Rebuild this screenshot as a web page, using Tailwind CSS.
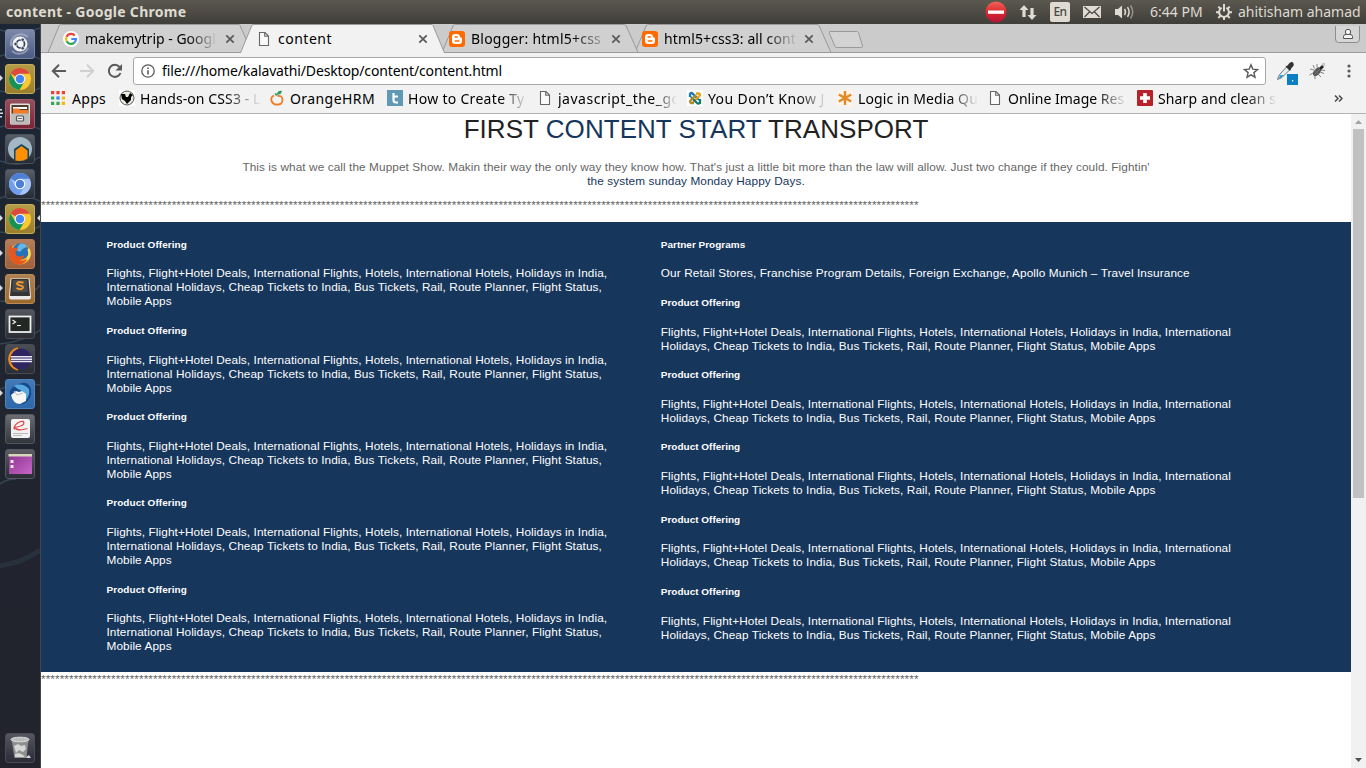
<!DOCTYPE html>
<html lang="en">
<head>
<meta charset="utf-8">
<title>content</title>
<script src="https://cdn.jsdelivr.net/npm/@tailwindcss/browser@4"></script>
</head>
<body class="w-[1366px] h-[768px] overflow-hidden flex flex-col bg-white font-['Noto_Sans',sans-serif] text-[14px] whitespace-nowrap">

<!-- shared symbols -->
<svg class="hidden">
  <symbol id="chrome" viewBox="0 0 24 24">
    <circle cx="12" cy="12" r="11" fill="#fbc92f"/>
    <path d="M12 12 2.500 6.500A11 11 0 0 1 21.600 6.700H12z" fill="#db4a3c"/>
    <path d="M2.500 6.500A11 11 0 0 0 11.500 23L16.500 14.500 12 12 7.300 14.600z" fill="#159257"/>
    <circle cx="12" cy="12" r="5.300" fill="#f3f3f3"/><circle cx="12" cy="12" r="4.200" fill="#4487f4"/>
  </symbol>
  <symbol id="page" viewBox="0 0 16 16"><path d="M3.500 1.500h5.500l3.500 3.500v9.500h-9zM8.700 1.700v3.600h3.600" fill="#fafafa" stroke="#666" stroke-width="1.100"/></symbol>
  <symbol id="blogger" viewBox="0 0 16 16"><rect width="16" height="16" rx="3" fill="#ff6a00"/><path d="M6 3h2.300a2.700 2.700 0 0 1 2.700 2.500c.1.900.4 1 1.100 1 .6 0 .9.400.9 1V10a3 3 0 0 1-3 3H6a3 3 0 0 1-3-3V6a3 3 0 0 1 3-3z" fill="#fff"/><path d="M6.200 6h2M6.200 10h3.700" stroke="#ff6a00" stroke-width="1.400" stroke-linecap="round"/></symbol>
  <symbol id="close" viewBox="0 0 10 10"><path d="M1.300 1.300l7.400 7.400M8.700 1.300l-7.400 7.400" stroke="#5a5a5a" stroke-width="1.700"/></symbol>
</svg>

<!-- system panel -->
<header class="h-[24px] shrink-0 flex items-center bg-linear-to-b from-[#5b584f] to-[#3f3e39] text-[#dfdbd2] pl-[6px] pr-[6px]">
  <div class="flex-1 font-bold tracking-[0.28px] leading-[22px]">content - Google Chrome</div>
  <svg class="w-[22px] h-[22px] mr-[12px]" viewBox="0 0 22 22"><defs><linearGradient id="stop" x2="0" y2="1"><stop stop-color="#f2635a"/><stop offset=".5" stop-color="#dc2a2e"/><stop offset="1" stop-color="#b3123a"/></linearGradient></defs><circle cx="11" cy="11" r="10.500" fill="url(#stop)"/><rect x="3" y="9.500" width="16" height="3.300" fill="#fff"/></svg>
  <svg class="w-[18px] h-[18px] mr-[13px]" viewBox="0 0 18 18" fill="#dfdbd2"><path d="M5 2l4.500 5H6.600v7H3.400V7H.5zM13 17l-4.500-5h2.900V5h3.200v7h2.900z"/></svg>
  <div class="w-[20px] h-[20px] rounded-[2px] bg-[#dfdbd2] text-[#4a4843] text-[12px] leading-[20px] text-center mr-[13px] tracking-[-0.5px] font-medium">En</div>
  <svg class="w-[18px] h-[14px] mr-[14px]" viewBox="0 0 18 14"><rect y="1" width="18" height="12" fill="#dfdbd2"/><path d="M1.500 2l7.500 6.500L16.500 2M1.500 12l5-5M16.500 12l-5-5" fill="none" stroke="#4c4a44" stroke-width="1.300"/></svg>
  <svg class="w-[20px] h-[16px] mr-[15px]" viewBox="0 0 20 16"><path d="M0 5h3l4-3.500v13L3 11H0z" fill="#dfdbd2"/><g fill="none" stroke="#dfdbd2" stroke-width="1.500"><path d="M9.500 5q2 3 0 6"/><path d="M12.500 3.200q3.200 4.800 0 9.600"/><path d="M15.500 1.500q4.500 6.500 0 13" opacity=".5"/></g></svg>
  <div class="w-[66px] leading-[22px]">6:44 PM</div>
  <svg class="w-[16px] h-[16px] mr-[6px]" viewBox="0 0 16 16" fill="none" stroke="#dfdbd2" stroke-width="2"><path d="M5.700 3.800a4.900 4.900 0 1 0 4.600 0M8 0v7.500"/><path d="M0 8.300h3M13 8.300h3M2.300 2.600l2.100 2.100M13.700 2.600l-2.100 2.100M2.300 14l2.100-2.100M13.700 14l-2.100-2.100M8 13v3"/></svg>
  <div class="w-[122px] leading-[22px]">ahitisham ahamad</div>
</header>

<div class="flex-1 flex min-h-0">
  <!-- launcher -->
  <nav class="w-[41px] relative shrink-0 flex flex-col gap-[5px] pt-[5px] pl-[5px] border-r border-[#45444a] bg-linear-to-b from-[#1c2634] via-[#20252f] to-[#22232d]">
    <svg class="absolute inset-0 w-[40px] h-[744px]" viewBox="0 0 40 744" fill="none" stroke="#4c6478" stroke-width="1.500" opacity=".5"><path d="M0 6q20 6 40-2M0 32q22-6 40 3M0 67q25 6 40-3M0 103q20-6 40 2M0 137q20 8 40-4M0 174q18-6 40 3M0 208q24 4 40-6M0 277q24 3 40-16M0 320q22-2 40-14M0 365q20-8 40-4M0 460q6-5 16-5" /><path d="M0 542q24-4 40-16" stroke-width="5" opacity=".4"/></svg>
    <svg class="absolute left-0 top-[50px] w-[40px] h-[340px]" viewBox="0 0 40 340" fill="#d8dadf"><path d="M0 1l3 3-3 3zM0 141l3 3-3 3zM0 176l3 3-3 3zM0 211l3 3-3 3zM0 316l3 3-3 3zM40 141l-3 3 3 3z"/><path d="M0 35h2v1.500H0zM0 38.500h3V40H0zM0 42h2v1.500H0z"/></svg>

    <div class="relative size-[30px] rounded-[3px] border border-[#7883a0] bg-linear-to-b from-[#7d89a8] to-[#4b5a82]"><svg class="size-full" viewBox="0 0 28 28" fill="none"><path d="M6 10a10 10 0 0 1 16-3M22 18a10 10 0 0 1-16 3M5 16A10 10 0 0 1 9 6" stroke="#c3cada" stroke-width="2" opacity=".5"/><circle cx="14" cy="14" r="7.500" fill="#f3f4f6"/><circle cx="14.500" cy="14" r="4" stroke="#35415c" stroke-width="1.700"/><g fill="#35415c" stroke="#f3f4f6" stroke-width=".7"><circle cx="9.500" cy="14" r="1.700"/><circle cx="16.700" cy="9.700" r="1.700"/><circle cx="16.700" cy="18.300" r="1.700"/></g></svg></div>
    <div class="relative size-[30px] rounded-[3px] border border-[#c4ab5c] bg-linear-to-b from-[#b39b48] to-[#9a7f2c] p-[2px]"><svg class="size-full"><use href="#chrome"/></svg></div>
    <div class="relative size-[30px] rounded-[3px] border border-[#a15a66] bg-linear-to-b from-[#93505c] to-[#7a2233]"><svg class="size-full" viewBox="0 0 28 28"><rect x="4" y="3.500" width="20" height="21" rx="1.500" fill="#e2e0dd"/><rect x="5.500" y="5" width="17" height="9" fill="#513b30"/><path d="M7 7h14v2H7z" fill="#fff"/><path d="M7 8.500h6l1 1.500h8v4H7z" fill="#f07c28"/><rect x="4.500" y="13.500" width="19" height="11" rx="1" fill="#bdbcba"/><rect x="10.500" y="16" width="7" height="5" rx="1" fill="#eee" stroke="#555" stroke-width="1.200"/><path d="M12 18.500h4" stroke="#666"/></svg></div>
    <div class="relative size-[30px] rounded-[3px] border border-[#4a505a] bg-linear-to-b from-[#585f68] to-[#252c36]"><svg class="size-full" viewBox="0 0 28 28"><circle cx="14" cy="14" r="12" fill="#a4b7c4"/><path d="M8 25V14l7.500-5 7.500 5v9q-7 5-15 2z" fill="#16455e"/><path d="M9.500 25.500V15.500L15.500 11l6 4.500v8q-5 3.500-12 2z" fill="#ff9100"/></svg></div>
    <div class="relative size-[30px] rounded-[3px] border border-[#4a505a] bg-linear-to-b from-[#585f68] to-[#252c36] p-[2px]"><svg class="size-full" viewBox="0 0 24 24"><circle cx="12" cy="12" r="11" fill="#a6c4f7"/><path d="M12 12 2.500 6.500A11 11 0 0 1 21.600 6.700H12z" fill="#4d7fd4"/><path d="M2.500 6.500A11 11 0 0 0 11.500 23L16.500 14.500 7.300 14.600z" fill="#709ded"/><circle cx="12" cy="12" r="5.300" fill="#fff"/><circle cx="12" cy="12" r="4.200" fill="#4c80d8"/></svg></div>
    <div class="relative size-[30px] rounded-[3px] border border-[#c4ab5c] bg-linear-to-b from-[#b39b48] to-[#9a7f2c] p-[2px]"><svg class="size-full"><use href="#chrome"/></svg></div>
    <div class="relative size-[30px] rounded-[3px] border border-[#b57d58] bg-linear-to-b from-[#b47d5b] to-[#a0603a]"><svg class="size-full" viewBox="0 0 28 28"><circle cx="14" cy="14" r="10.500" fill="#f9b12a"/><circle cx="14.500" cy="11.500" r="8.200" fill="#2572bb"/><path d="M14 3.800q5-1 7 3l-4 2-3 3-3-1 .5-4z" fill="#66b5e4"/><path d="M4.500 5L7 8.500q3-1.500 5 .5l-2.500 2.500q-.5 5 4 5 3 0 5-1.500-1 5-5.500 5 4 2 8-1-3 5.500-7.500 5.500-8.500 0-10-9Q2.500 9 4.500 5z" fill="#e5571d"/><path d="M22.500 9q2.500 6-1 10.500" stroke="#fde05a" stroke-width="2.500" fill="none"/></svg></div>
    <div class="relative size-[30px] rounded-[3px] border border-[#ba8b52] bg-linear-to-b from-[#ad8254] to-[#9c6a2c]"><svg class="size-full" viewBox="0 0 28 28"><path d="M4.500 3.500h19L25 22q0 2.500-2 2.500H5q-2 0-2-2.500z" fill="#e9e9e9"/><path d="M5.500 4h17l1.500 17H4z" fill="#353535"/><path d="M7 5h14l.7 12H6.300z" fill="#4b4b4b"/><path d="M17.500 7.800q-5.500-2-6.500.7c-.5 2.500 6.500 1.200 6 4-.7 2.500-4.500 1.700-6.500.5" fill="none" stroke="#f39a2b" stroke-width="2"/></svg></div>
    <div class="relative size-[30px] rounded-[3px] border border-[#484b53] bg-linear-to-b from-[#54575d] to-[#2a2d36]"><svg class="size-full" viewBox="0 0 28 28"><rect x="3.500" y="6.500" width="21" height="15.500" fill="#232723" stroke="#eee" stroke-width="1.800"/><path d="M6.500 10l3 2-3 2M11 15.500h4" stroke="#f5f5f5" stroke-width="1.200" fill="none"/></svg></div>
    <div class="relative size-[30px] rounded-[3px] border border-[#484b53] bg-linear-to-b from-[#4b4e55] to-[#2a2d36]"><svg class="size-full" viewBox="0 0 28 28"><path d="M12 3.500a10.700 10.700 0 0 0 0 21" stroke="#f08c1b" stroke-width="2.500" fill="none"/><circle cx="15" cy="14" r="10.500" fill="#2e2562"/><path d="M5 11.800h21M5 14.200h21M5 16.600h21" stroke="#e9e8f3" stroke-width="1.500"/></svg></div>
    <div class="relative size-[30px] rounded-[3px] border border-[#4f83bd] bg-linear-to-b from-[#4279b6] to-[#2e68ab]"><svg class="size-full" viewBox="0 0 28 28"><path d="M13 4q9-4 12 5 2 11-8 15-7 2-11-5Q1 12 7 7q3 0 6-3z" fill="#174a8c"/><path d="M8 6q8-4 15 3 1 6-3 11 0-8-8-11z" fill="#59a7df"/><path d="M5 15l5-4 3 1 3-1 4 3 0 7-6 3q-7 0-9-9z" fill="#f5f5f4"/><path d="M8 11l3 4 6-2" stroke="#b5bac2" fill="none"/></svg></div>
    <div class="relative size-[30px] rounded-[3px] border border-[#54575d] bg-linear-to-b from-[#6b6d72] to-[#33363d]"><svg class="size-full" viewBox="0 0 28 28"><rect x="5" y="4" width="19" height="19" rx="2" fill="#f2f2f2"/><path d="M8.500 14.500q-1.500-3 3-6.500 3-2 6-1.500 1.500 3-3 4.500-4 1.200-6 1.500 3 4 13 1" stroke="#e44b4b" stroke-width="1.300" fill="none"/><path d="M7 18.500h15M7 20.500h9" stroke="#b9b9b9"/></svg></div>
    <div class="relative size-[30px] rounded-[3px] border border-[#54575d] bg-linear-to-b from-[#5b5d62] to-[#2b2d36]"><svg class="size-full" viewBox="0 0 28 28"><defs><linearGradient id="win" x2="1" y2="1"><stop stop-color="#8f3392"/><stop offset="1" stop-color="#c767c5"/></linearGradient></defs><rect x="3" y="5" width="23" height="19" fill="url(#win)"/><rect x="2.500" y="4" width="23.500" height="2.500" fill="#d9d7b9"/><path d="M4.500 10h3v3h-3zM4.500 15h3v3h-3z" fill="#efe3ef"/></svg></div>
    <div class="relative mt-auto mb-[5px] size-[30px] rounded-[3px] border border-[#4a4a56] bg-linear-to-b from-[#565560] to-[#2c2c38]"><svg class="size-full" viewBox="0 0 28 28"><path d="M5.500 5h17l-2 19h-12z" fill="#8c8f8e"/><ellipse cx="14" cy="5.500" rx="9" ry="2.300" fill="#b9bbba" stroke="#dedede"/><path d="M8 12l4-2 3 2 4-1 1 4-3 3-4-2-3 3zM9 20l4-1 4 2 2 2H9z" fill="#d5d7d4"/><path d="M20 23l3-2 2 3h-4z" fill="#d5d5d5"/></svg></div>
  </nav>

  <!-- browser window -->
  <main class="flex-1 flex flex-col min-w-0">
    <!-- tab strip -->
    <div class="relative h-[29px] shrink-0 bg-[#cbcbcb]">
      <svg class="absolute inset-0 w-[1325px] h-[29px]" viewBox="41 24 1325 29">
        <path d="M41 52.500h1325" stroke="#9d9d9d"/>
        <g fill="#d0d0d0" stroke="#999"><path d="M635 52.500L646.500 25q1-.5 2-.5H817q1.500 0 2 1L831 52.500z"/><path d="M442 52.500L453.500 25q1-.5 2-.5H624q1.500 0 2 1L638 52.500z"/><path d="M47 52.500h4q-2 0-3 0L59.500 25q1-.5 2-.5H238q1.500 0 2 1L252 52.500z"/></g>
        <path d="M240 54L252 25q1-.5 2-.5H431q1.500 0 2 1L445 54z" fill="#f2f2f2" stroke="#999"/>
        <path d="M829.500 31.500h27q1.500 0 2 1l4 13.500q0 1.500-1 1.500H837q-1.500 0-2-1l-5.500-13z" fill="#d3d3d3" stroke="#999"/>
        <path d="M1335.500 26v13q0 3.500 3 3.500h18q3 0 3-3.500V26" fill="#d6d6d6" stroke="#8d8d8d"/>
        <path d="M1343.500 38.500v-2q0-2 2.500-2h4q2.500 0 2.500 2v2z" fill="#f5f5f5" stroke="#555"/><circle cx="1348" cy="32" r="2.700" fill="#f5f5f5" stroke="#555"/>
      </svg>
      <div class="relative h-[29px] flex items-center pl-[22px]">
        <div class="w-[193px] flex items-center">
          <svg class="size-[16px] mr-[6px]" viewBox="0 0 16 16"><circle cx="8" cy="8" r="8" fill="#fff"/><g fill="none" stroke-width="2.200"><path d="M11.800 4.500A5 5 0 0 0 3.600 5.700" stroke="#ea4335"/><path d="M3.600 5.700a5 5 0 0 0 0 4.600" stroke="#fbbc05"/><path d="M3.600 10.300a5 5 0 0 0 7.800 1.300" stroke="#34a853"/><path d="M11.400 11.600A5 5 0 0 0 13 8H8.300" stroke="#4285f4"/></g></svg>
          <div class="w-[132px] text-black [mask-image:linear-gradient(to_right,black_78%,transparent)]">makemytrip - Googl</div>
          <svg class="size-[10px] ml-[8px]"><use href="#close"/></svg>
        </div>
        <div class="w-[193px] flex items-center">
          <svg class="size-[16px] mr-[6px]"><use href="#page"/></svg>
          <div class="w-[132px] tracking-[0.5px] text-black">content</div>
          <svg class="size-[10px] ml-[8px]"><use href="#close"/></svg>
        </div>
        <div class="w-[193px] flex items-center">
          <svg class="size-[16px] mr-[6px]"><use href="#blogger"/></svg>
          <div class="w-[132px] tracking-[0.22px] text-black [mask-image:linear-gradient(to_right,black_76%,transparent_106%)]">Blogger: html5+css</div>
          <svg class="size-[10px] ml-[8px]"><use href="#close"/></svg>
        </div>
        <div class="w-[193px] flex items-center">
          <svg class="size-[16px] mr-[6px]"><use href="#blogger"/></svg>
          <div class="w-[134px] tracking-[0.12px] text-black [mask-image:linear-gradient(to_right,black_76%,transparent)]">html5+css3: all cont</div>
          <svg class="size-[10px] ml-[6px]"><use href="#close"/></svg>
        </div>
      </div>
    </div>

    <!-- address bar -->
    <div class="h-[36px] shrink-0 bg-[#f2f2f2] flex items-center pl-[10px]">
      <svg class="size-[16px] mr-[12px]" viewBox="0 0 16 16" fill="none" stroke="#5a5a5a" stroke-width="2"><path d="M15 8H2.500M8 1.800L1.800 8 8 14.200"/></svg>
      <svg class="size-[16px] mr-[12px]" viewBox="0 0 16 16" fill="none" stroke="#d0d0d0" stroke-width="2"><path d="M1 8h12.500M8 1.800L14.200 8 8 14.200"/></svg>
      <svg class="size-[16px] mr-[10px]" viewBox="0 0 16 16"><path d="M13.500 10A6 6 0 1 1 12.500 4" fill="none" stroke="#5a5a5a" stroke-width="2"/><path d="M15 1v6.500H8.500z" fill="#5a5a5a"/></svg>
      <div class="w-[1133px] h-[28px] bg-white border border-[#a8a8a8] rounded-[3px] flex items-center pl-[7px] pr-[6px] text-black">
        <svg class="size-[14px] mr-[7px]" viewBox="0 0 14 14"><circle cx="7" cy="7" r="6.200" fill="none" stroke="#5a5a5a" stroke-width="1.300"/><path d="M7 6.200v4.300M7 3.500v1.500" stroke="#5a5a5a" stroke-width="1.600"/></svg>
        <div class="flex-1 pb-[2px] tracking-[-0.135px]">file:///home/kalavathi/Desktop/content/content.html</div>
        <svg class="size-[16px]" viewBox="0 0 16 16"><path d="M8 1.800l1.800 4.300 4.700.4-3.600 3.100 1.100 4.600L8 11.800l-4 2.400 1.100-4.600L1.500 6.500l4.700-.4z" fill="none" stroke="#5a5a5a" stroke-width="1.400"/></svg>
      </div>
      <svg class="w-[22px] h-[24px] ml-[10px] mt-[3px]" viewBox="0 0 22 24"><path d="M11.500 5l3 3-8.500 8.500-4.500 2 1.800-4.700z" fill="#e3f0f7" stroke="#777"/><path d="M4 14h4l-3 3-2 .5z" fill="#2da3dc"/><path d="M9.500 5.500l2-1 2-2.500q3-2 4 .5 1 2-2 4.500l-1.500 3z" fill="#333"/><rect x="11" y="13" width="11" height="11" fill="#0a7fc2"/><rect x="16" y="19" width="1.200" height="1.500" fill="#fff"/></svg>
      <svg class="size-[16px] ml-[11px]" viewBox="0 0 16 16"><path d="M4.500 12.500q-2-2.500 2-6.500l3-2 3 3-2 3.500q-3.500 4-6 2z" fill="#555"/><path d="M10 5l3-3 2 2-3 3z" fill="#222"/><path d="M5 7L1 6M5.500 5.500L4 2M8 4.500L8 1M4 10l-3.500 2M6 13l0 3M9 11l3 3M11 9l4 1.500M12 7l4 .5M5 12l6-6M6 7l3 4" stroke="#777" fill="none" stroke-width=".9"/><circle cx="14.500" cy="1.500" r="1.200" fill="#ddd" stroke="#888" stroke-width=".5"/></svg>
      <svg class="w-[4px] h-[14px] ml-[22px]" viewBox="0 0 4 14" fill="#5a5a5a"><circle cx="2" cy="2" r="1.600"/><circle cx="2" cy="7" r="1.600"/><circle cx="2" cy="12" r="1.600"/></svg>
    </div>

    <!-- bookmarks -->
    <div class="h-[25px] shrink-0 bg-[#f2f2f2] border-b border-[#b3b3b3] flex items-center pl-[10px] pb-[6px] text-black tracking-[0.3px]">
      <div class="w-[68px] flex items-center">
        <svg class="size-[14px] mr-[7px]" viewBox="0 0 13 13"><path d="M0 0h3v3H0zM5 0h3v3H5zM10 0h3v3h-3z" fill="#ea4335"/><path d="M0 5h3v3H0zM0 10h3v3H0zM5 10h3v3H5z" fill="#34a853"/><path d="M5 5h3v3H5z" fill="#2d8cf0"/><path d="M10 5h3v3h-3zM10 10h3v3h-3z" fill="#fbb40a"/></svg>
        <div>Apps</div>
      </div>
      <div class="w-[150px] flex items-center">
        <svg class="size-[16px] mr-[5px]" viewBox="0 0 16 16"><rect width="16" height="16" fill="#fff"/><circle cx="8" cy="8" r="7" fill="#e9ead9" stroke="#555"/><path d="M2 4l4 0 1 3 2 0 2-4 3 2-2 2 0 3-4 4-2-3-3-2z" fill="#000"/></svg>
        <div class="w-[121px] tracking-[0.1px] [mask-image:linear-gradient(to_right,black_70%,transparent)]">Hands-on CSS3 - L</div>
      </div>
      <div class="w-[118px] flex items-center">
        <svg class="size-[16px] mr-[5px]" viewBox="0 0 16 16"><path d="M5 5.500Q1.500 7 2.500 11q2 4 5.500 3.500 5.500.500 5.500-5 0-4-5-3.500" fill="none" stroke="#ef7b22" stroke-width="1.800"/><path d="M7 6q-3-5 1-2 1-4 5-3-1 4-4 3.500z" fill="#2c9a5b"/></svg>
        <div class="tracking-[0.42px]">OrangeHRM</div>
      </div>
      <div class="w-[150px] flex items-center">
        <svg class="size-[16px] mr-[5px]" viewBox="0 0 16 16"><rect width="16" height="16" fill="#6199b5"/><path d="M6.500 3v7q0 2.500 2.500 2.500h2M6.500 6.500H11" stroke="#fff" stroke-width="2.200" fill="none"/></svg>
        <div class="w-[119px] [mask-image:linear-gradient(to_right,black_78%,transparent)]">How to Create Ty</div>
      </div>
      <div class="w-[150px] flex items-center">
        <svg class="size-[16px] mr-[5px]"><use href="#page"/></svg>
        <div class="w-[119px] tracking-[0.5px] [mask-image:linear-gradient(to_right,black_80%,transparent)]">javascript_the_go</div>
      </div>
      <div class="w-[150px] flex items-center">
        <svg class="size-[16px] mr-[5px]" viewBox="0 0 16 16" fill="none" stroke-width="2.300"><rect width="16" height="16" fill="#fff"/><path d="M3 7V4q1-2 3 0l6 6" stroke="#1478bd"/><path d="M9 3.500h3q2 1 0 3L6 12" stroke="#e6a11a"/><path d="M13 9v4q-2 1-3 0L4 7" stroke="#147a72"/><path d="M7 13H4q-2-1 0-3l5-5" stroke="#b08a28"/></svg>
        <div class="w-[119px] tracking-[0.4px] [mask-image:linear-gradient(to_right,black_76%,transparent)]">You Don’t Know J</div>
      </div>
      <div class="w-[150px] flex items-center">
        <svg class="size-[16px] mr-[5px]" viewBox="0 0 16 16"><rect width="16" height="16" fill="#fdf3e8"/><path d="M8 1v14M1.800 4.500l12.400 7M14.200 4.500l-12.400 7" stroke="#e58a23" stroke-width="2.400"/></svg>
        <div class="w-[120px] tracking-[0.1px] [mask-image:linear-gradient(to_right,black_76%,transparent)]">Logic in Media Qu</div>
      </div>
      <div class="w-[150px] flex items-center">
        <svg class="size-[16px] mr-[5px]"><use href="#page"/></svg>
        <div class="w-[119px] tracking-[0px] [mask-image:linear-gradient(to_right,black_74%,transparent)]">Online Image Res</div>
      </div>
      <div class="w-[197px] flex items-center">
        <svg class="size-[16px] mr-[5px]" viewBox="0 0 16 16"><rect width="16" height="16" rx="1" fill="#b8202a"/><path d="M8 3v10M3 8h10" stroke="#fff" stroke-width="3.600"/></svg>
        <div class="w-[119px] tracking-[0.12px] [mask-image:linear-gradient(to_right,black_74%,transparent)]">Sharp and clean s</div>
      </div>
      <svg class="w-[9px] h-[7px]" viewBox="0 0 9 7"><path d="M1 .5l3 3-3 3M5 .5l3 3-3 3" fill="none" stroke="#4a4a4a" stroke-width="1.500"/></svg>
    </div>

    <!-- page viewport -->
    <div class="flex-1 flex min-h-0">
      <article class="flex-1 min-w-0 font-['Liberation_Sans',Arial,sans-serif] text-[11.8px] tracking-[0.086px] leading-[14px] text-[#666]">
        <h1 class="h-[46px] text-center text-[26px] tracking-[0.05px] leading-[30px] text-[#222]">FIRST <span class="text-[#16365c]">CONTENT START</span> TRANSPORT</h1>
        <p class="text-center">This is what we call the Muppet Show. Makin their way the only way they know how. That's just a little bit more than the law will allow. Just two change if they could. Fightin'<br><span class="text-[#16365c]">the system sunday Monday Happy Days.</span></p>
        <p class="pt-[10px] h-[34px] tracking-[0.077px]">********************************************************************************************************************************************************************************************</p>
        <section class="h-[450px] bg-[#16365c] text-white flex pl-[65.5px]">
          <div class="w-[554.3px]">
            <h5 class="mt-[16.6px] mb-[16.7px] text-[9.96px] leading-[11px] font-bold">Product Offering</h5>
            <p>Flights, Flight+Hotel Deals, International Flights, Hotels, International Hotels, Holidays in India,<br>International Holidays, Cheap Tickets to India, Bus Tickets, Rail, Route Planner, Flight Status,<br>Mobile Apps</p>
            <h5 class="mt-[16.6px] mb-[16.7px] text-[9.96px] leading-[11px] font-bold">Product Offering</h5>
            <p>Flights, Flight+Hotel Deals, International Flights, Hotels, International Hotels, Holidays in India,<br>International Holidays, Cheap Tickets to India, Bus Tickets, Rail, Route Planner, Flight Status,<br>Mobile Apps</p>
            <h5 class="mt-[16.6px] mb-[16.7px] text-[9.96px] leading-[11px] font-bold">Product Offering</h5>
            <p>Flights, Flight+Hotel Deals, International Flights, Hotels, International Hotels, Holidays in India,<br>International Holidays, Cheap Tickets to India, Bus Tickets, Rail, Route Planner, Flight Status,<br>Mobile Apps</p>
            <h5 class="mt-[16.6px] mb-[16.7px] text-[9.96px] leading-[11px] font-bold">Product Offering</h5>
            <p>Flights, Flight+Hotel Deals, International Flights, Hotels, International Hotels, Holidays in India,<br>International Holidays, Cheap Tickets to India, Bus Tickets, Rail, Route Planner, Flight Status,<br>Mobile Apps</p>
            <h5 class="mt-[16.6px] mb-[16.7px] text-[9.96px] leading-[11px] font-bold">Product Offering</h5>
            <p>Flights, Flight+Hotel Deals, International Flights, Hotels, International Hotels, Holidays in India,<br>International Holidays, Cheap Tickets to India, Bus Tickets, Rail, Route Planner, Flight Status,<br>Mobile Apps</p>
          </div>
          <div>
            <h5 class="mt-[16.6px] mb-[16.7px] text-[9.96px] tracking-[0.02px] leading-[11px] font-bold">Partner Programs</h5>
            <p class="tracking-[0.1px]">Our Retail Stores, Franchise Program Details, Foreign Exchange, Apollo Munich – Travel Insurance</p>
            <h5 class="mt-[16.6px] mb-[16.7px] text-[9.96px] tracking-[0.02px] leading-[11px] font-bold">Product Offering</h5>
            <p>Flights, Flight+Hotel Deals, International Flights, Hotels, International Hotels, Holidays in India, International<br>Holidays, Cheap Tickets to India, Bus Tickets, Rail, Route Planner, Flight Status, Mobile Apps</p>
            <h5 class="mt-[16.6px] mb-[16.7px] text-[9.96px] tracking-[0.02px] leading-[11px] font-bold">Product Offering</h5>
            <p>Flights, Flight+Hotel Deals, International Flights, Hotels, International Hotels, Holidays in India, International<br>Holidays, Cheap Tickets to India, Bus Tickets, Rail, Route Planner, Flight Status, Mobile Apps</p>
            <h5 class="mt-[16.6px] mb-[16.7px] text-[9.96px] tracking-[0.02px] leading-[11px] font-bold">Product Offering</h5>
            <p>Flights, Flight+Hotel Deals, International Flights, Hotels, International Hotels, Holidays in India, International<br>Holidays, Cheap Tickets to India, Bus Tickets, Rail, Route Planner, Flight Status, Mobile Apps</p>
            <h5 class="mt-[16.6px] mb-[16.7px] text-[9.96px] tracking-[0.02px] leading-[11px] font-bold">Product Offering</h5>
            <p>Flights, Flight+Hotel Deals, International Flights, Hotels, International Hotels, Holidays in India, International<br>Holidays, Cheap Tickets to India, Bus Tickets, Rail, Route Planner, Flight Status, Mobile Apps</p>
            <h5 class="mt-[16.6px] mb-[16.7px] text-[9.96px] tracking-[0.02px] leading-[11px] font-bold">Product Offering</h5>
            <p>Flights, Flight+Hotel Deals, International Flights, Hotels, International Hotels, Holidays in India, International<br>Holidays, Cheap Tickets to India, Bus Tickets, Rail, Route Planner, Flight Status, Mobile Apps</p>
          </div>
        </section>
        <p class="tracking-[0.077px]">********************************************************************************************************************************************************************************************</p>
      </article>
      <!-- scrollbar -->
      <div class="w-[15px] shrink-0 bg-[#f1f1f1] flex flex-col items-center">
        <svg class="w-[15px] h-[15px]" viewBox="0 0 15 15"><path d="M4 10l3.500-4L11 10z" fill="#a3a3a3"/></svg>
        <div class="w-[11px] h-[369px] bg-[#c1c1c1]"></div>
        <svg class="w-[15px] h-[15px] mt-auto" viewBox="0 0 15 15"><path d="M4 5l3.500 4L11 5z" fill="#505050"/></svg>
      </div>
    </div>
  </main>
</div>
</body>
</html>
